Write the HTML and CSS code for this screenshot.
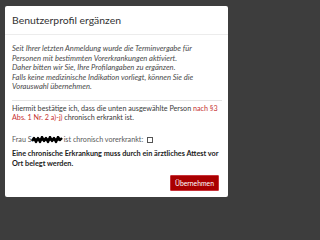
FILE: index.html
```html
<!DOCTYPE html>
<html lang="de">
<head>
<meta charset="utf-8">
<link rel="stylesheet" href="styles.css">
</head>
<body>
<div class="modal">
  <div class="modal-header">Benutzerprofil ergänzen</div>
  <div class="modal-body">
    <p class="intro">Seit Ihrer letzten Anmeldung wurde die Terminvergabe für<br>Personen mit bestimmten Vorerkrankungen aktiviert.<br>Daher bitten wir Sie, Ihre Profilangaben zu ergänzen.<br>Falls keine medizinische Indikation vorliegt, können Sie die<br>Vorauswahl übernehmen.</p>
    <hr class="sep">
    <p class="confirm">Hiermit bestätige ich, dass die unten ausgewählte Person <span class="red">nach §3<br>Abs. 1 Nr. 2 a)-j)</span> chronisch erkrankt ist.</p>
    <p class="person"><span>Frau S</span><svg class="redact" width="32" height="8" viewBox="0 0 32 8"><path d="M1 5 L3 2 L5 6 L7 2 L9 6 L11 1 L13 5 L15 2 L17 6 L19 1 L21 5 L23 2 L25 6 L27 1 L29 4 L31 2" stroke="#000" stroke-width="2.4" fill="none" stroke-linejoin="round"/><path d="M2 3.5 H30" stroke="#000" stroke-width="2.4"/></svg><span>ist chronisch vorerkrankt:</span><span class="check"></span></p>
    <p class="note">Eine chronische Erkrankung muss durch ein ärztliches Attest vor<br>Ort belegt werden.</p>
  </div>
  <div class="modal-footer"><button class="btn">Übernehmen</button></div>
</div>
</body>
</html>
```
FILE: styles.css
```css
html, body { margin: 0; padding: 0; }
html { background: #3d3d3d; }
body {
  font-family: Lato, "Open Sans", sans-serif;
  color: #333;
  width: 255px;
  height: 213px;
  overflow: hidden;
  padding: 6px 0 0 5px;
  box-sizing: border-box;
}
.modal {
  width: 223px;
  height: 191px;
  background: #fff;
  border-radius: 2px;
  display: flex;
  flex-direction: column;
  box-sizing: border-box;
}
.modal-header {
  height: 29px;
  box-sizing: border-box;
  border-bottom: 1px solid #ececec;
  padding: 7px 7px 0;
  font-size: 10.4px;
  line-height: 14px;
  color: #333;
}
.modal-body {
  padding: 9px 6px 0 7px;
  font-size: 7.2px;
  line-height: 9.3px;
  flex: 1;
}
.modal-body p { margin: 0; }
.intro { font-style: italic; font-size: 7.6px; line-height: 9.5px; color: #4a4a4a; }
.sep { border: 0; border-top: 1px solid #e4e4e4; margin: 8px 0 3px; }
.confirm { color: #3a3a3a; }
.red { color: #c62f2f; }
.person {
  margin-top: 13px !important;
  color: #5a5a5a;
  display: flex;
  align-items: center;
}
.redact { margin: 0 1px 0 -1px; }
.check {
  display: inline-block;
  width: 4px; height: 4px;
  border: 1px solid #555;
  margin-left: 4px;
}
.note {
  font-weight: bold;
  font-size: 7.3px;
  line-height: 9.8px;
  color: #222;
  margin-top: 5px !important;
  white-space: nowrap;
}
.modal-footer {
  display: flex;
  justify-content: flex-end;
  padding: 0 9px 6px;
}
.btn {
  width: 49px;
  height: 16px;
  background: #a90000;
  color: #fff;
  border: 1px solid #c8333a;
  border-radius: 1px;
  font-family: inherit;
  font-size: 6.8px;
  padding: 0;
}
```
